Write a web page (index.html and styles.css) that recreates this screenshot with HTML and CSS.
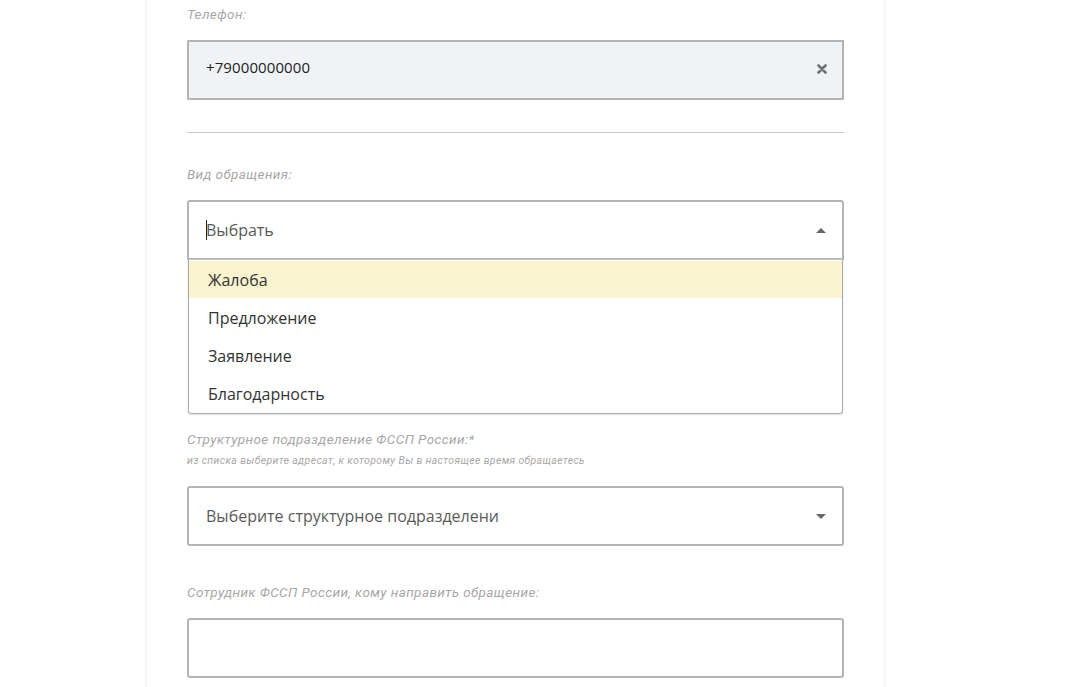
FILE: index.html
```html
<!DOCTYPE html>
<html lang="ru">

<head>
    <meta charset="utf-8">
    <meta name="viewport" content="width=device-width, initial-scale=1.0">
    <title>Обращение</title>
    <link rel="stylesheet" href="styles.css">
</head>

<body>
    <section class="forma">
        <!-- телефон -->
        <div class="pole">
            <p class="metka">Телефон:</p>
            <div class="vvod vvod-zapolnen">
                <span class="znachenie">+79000000000</span>
                <svg class="ochistit" width="10" height="10" viewBox="0 0 10 10">
                    <path d="M1.5 1.5 L8.5 8.5 M8.5 1.5 L1.5 8.5" stroke="#6f6f6f" stroke-width="2.6" stroke-linecap="round" />
                </svg>
            </div>
        </div>

        <hr class="razdel">

        <!-- вид обращения -->
        <div class="pole pole-vid">
            <p class="metka">Вид обращения:</p>
            <div class="vvod vybor otkryt">
                <span class="kursor"></span>
                <span class="podskazka">Выбрать</span>
                <span class="strelka vverh"></span>
            </div>
            <ul class="spisok">
                <li class="aktiv">Жалоба</li>
                <li>Предложение</li>
                <li>Заявление</li>
                <li>Благодарность</li>
            </ul>
        </div>

        <!-- подразделение -->
        <div class="pole pole-podr">
            <p class="metka">Структурное подразделение ФССП России:*</p>
            <p class="pomosh">из списка выберите адресат, к которому Вы в настоящее время обращаетесь</p>
            <div class="vvod vybor">
                <span class="podskazka">Выберите структурное подразделени</span>
                <span class="strelka"></span>
            </div>
        </div>

        <!-- сотрудник -->
        <div class="pole pole-sotr">
            <p class="metka">Сотрудник ФССП России, кому направить обращение:</p>
            <div class="vvod"></div>
        </div>
    </section>
</body>

</html>
```

FILE: styles.css
```css
body {
    margin: 0;
    background-color: #fff;
    font-family: "Open Sans", "Noto Sans", sans-serif;
}

.forma {
    width: 657px;
    margin-left: 145px;
    padding: 6px 40px 40px;
    background-color: #fff;
    border-left: 2px solid #f4f6f7;
    border-right: 2px solid #f4f6f7;
}

p {
    margin: 0;
}

.metka {
    font-family: Roboto, "Liberation Sans", sans-serif;
    font-style: italic;
    font-size: 13.5px;
    line-height: 16px;
    color: #a8a8a8;
    letter-spacing: 0.4px;
}

.pomosh {
    font-family: Roboto, "Liberation Sans", sans-serif;
    font-style: italic;
    font-size: 10.5px;
    line-height: 12px;
    color: #a8a8a8;
    letter-spacing: 0.35px;
    margin-top: 8px;
}

.vvod {
    box-sizing: border-box;
    height: 60px;
    margin-top: 18px;
    border: 2px solid #b4b4b4;
    border-radius: 3px;
    background-color: #fff;
    display: flex;
    align-items: center;
    padding: 0 15px 0 17px;
    font-size: 15px;
    color: #222;
}

.vvod-zapolnen {
    background-color: #eff3f6;
    border-radius: 1px;
}

.znachenie {
    flex: 1;
    letter-spacing: 0.1px;
    margin-top: -6px;
}

.ochistit {
    margin-top: -2px;
}

.razdel {
    border: 0;
    border-top: 1px solid #c8c8c8;
    margin: 32px 0 33px;
}

.vybor {
    font-size: 16px;
    color: #5a5a5a;
    padding-right: 16px;
}

.kursor {
    width: 1px;
    height: 20px;
    background-color: #222;
    margin-right: -1px;
}

.podskazka {
    flex: 1;
    white-space: nowrap;
}

.strelka {
    width: 0;
    height: 0;
    border-left: 5px solid transparent;
    border-right: 5px solid transparent;
    border-top: 5px solid #666;
}

.strelka.vverh {
    border-top: 0;
    border-bottom: 5px solid #666;
}

.otkryt {
    border-radius: 3px 3px 0 0;
}

.spisok {
    list-style: none;
    margin: -1px 1px 0;
    padding: 0;
    border: 1px solid #aaa;
    border-top-color: #c4c4c4;
    border-radius: 0 0 3px 3px;
    box-shadow: 0 1px 2px rgba(0, 0, 0, .12);
}

.spisok li {
    height: 38px;
    line-height: 40px;
    padding-left: 19px;
    font-size: 16px;
    color: #333;
}

.spisok li.aktiv {
    background-color: #faf3cf;
    height: 37px;
    line-height: 39px;
    margin-top: 1px;
}

.spisok li:last-child {
    height: 39px;
}

.pole-podr {
    margin-top: 17px;
}

.pole-podr .vvod {
    margin-top: 19px;
}

.pole-sotr {
    margin-top: 38px;
}

.pole-sotr .vvod {
    margin-top: 18px;
}
```
